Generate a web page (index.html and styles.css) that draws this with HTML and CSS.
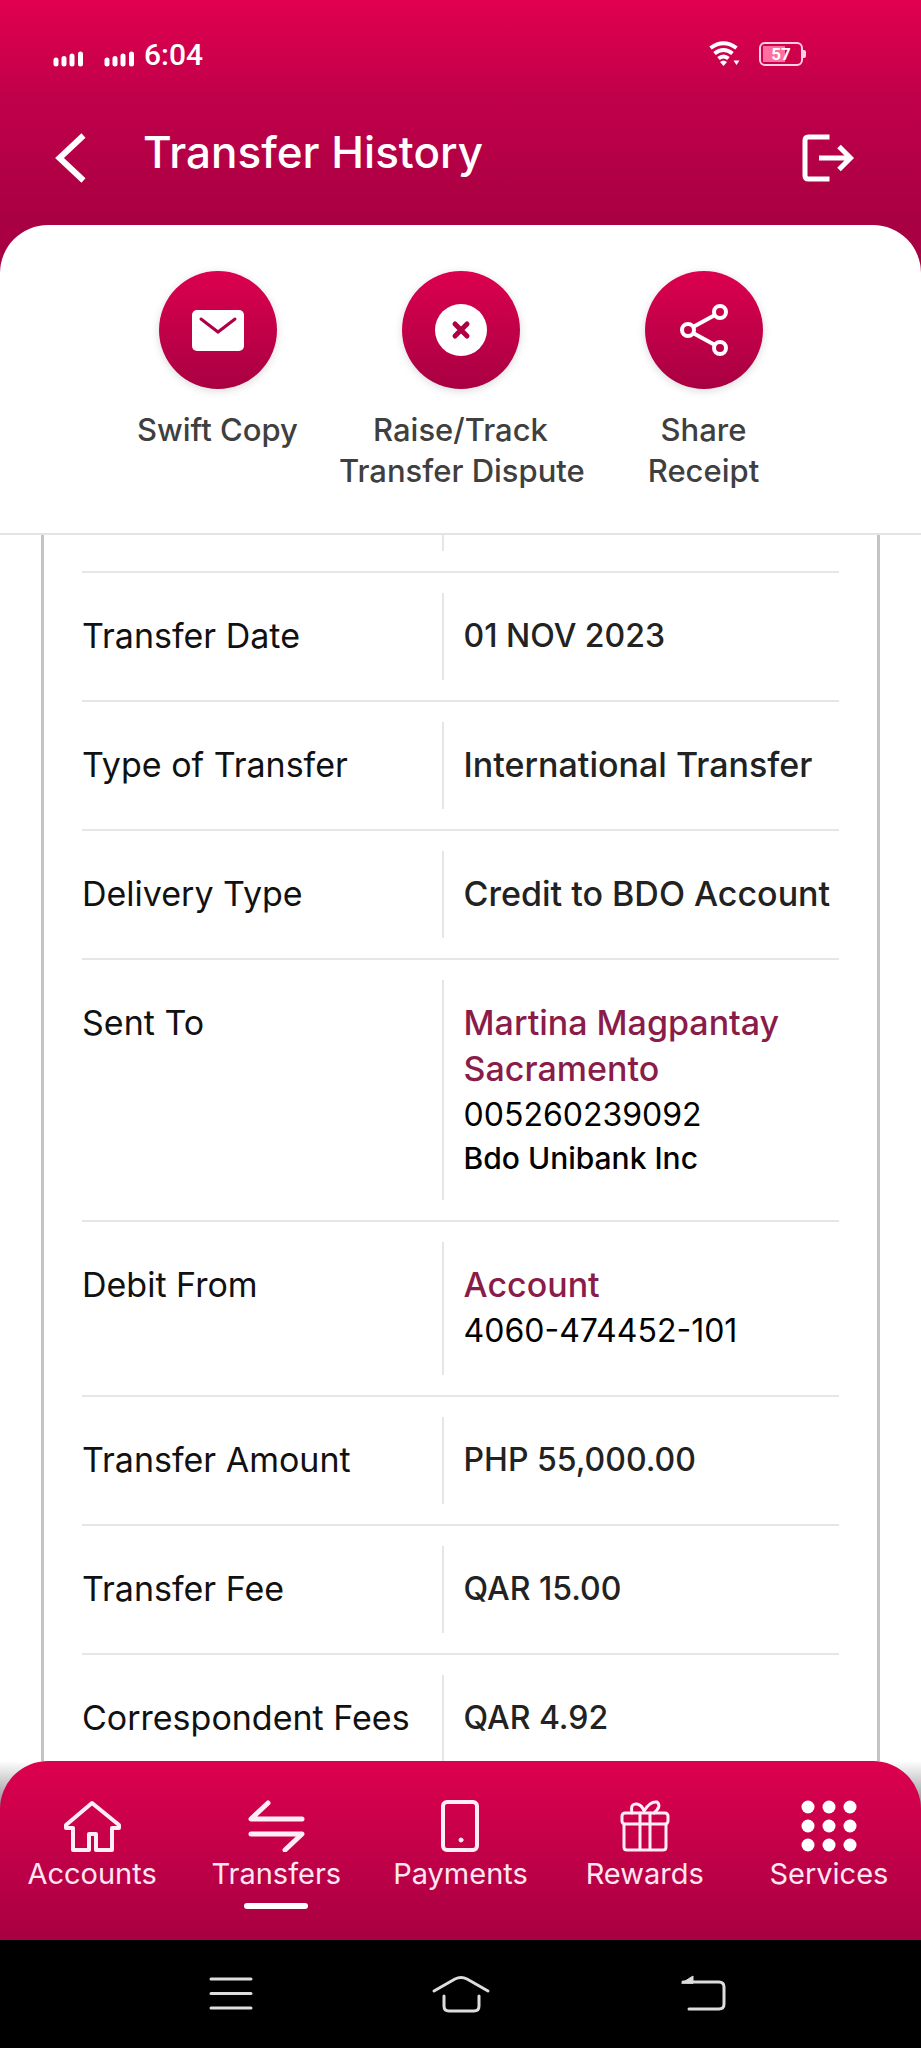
FILE: index.html
```html
<!DOCTYPE html>
<html lang="en">
<head>
    <meta charset="UTF-8">
    <meta name="viewport" content="width=device-width, initial-scale=1.0">
    <title>Transfer History</title>
    <link rel="stylesheet" href="styles.css">
</head>
<body>
    <div class="top">
        <div class="status-bar">
            <svg class="signal" width="31" height="16" viewBox="0 0 31 16">
                <path d="M3 9v4M11 7.500v5.500M19 5v8M27.500 3v10"/>
            </svg>
            <svg class="signal" width="31" height="16" viewBox="0 0 31 16">
                <path d="M3 9v4M11 7.500v5.500M19 5v8M27.500 3v10"/>
            </svg>
            <span class="clock">6:04</span>
            <svg class="wifi" width="32" height="26" viewBox="0 0 32 26">
                <path class="arc" d="M2.500 7Q15.500-2.500 28.500 7M6.500 12.500Q15.500 5.500 24.500 12.500M10.500 17.500Q15.500 13.500 20.500 17.500"/>
                <path class="dot" d="M12 21q3.500-3 7 0l-3.500 4zM25.500 19.500h6l-3 4.500z"/>
            </svg>
            <span class="battery">57</span>
        </div>
        <header>
            <button class="icon-button" aria-label="Back">
                <svg width="32" height="52" viewBox="0 0 32 52">
                    <path d="M28.500 3.500 4.500 26l24 22.500" stroke-width="6"/>
                </svg>
            </button>
            <h1>Transfer History</h1>
            <button class="icon-button" aria-label="Log out">
                <svg width="54" height="50" viewBox="0 0 54 50">
                    <path d="M28.500 4H7.500Q4 4 4 7.500v35Q4 46 7.500 46h21" stroke-width="5"/>
                    <path d="M18 25h31M38 13.500 49.500 25 38 36.500" stroke-width="5"/>
                </svg>
            </button>
        </header>
        <div class="actions">
            <button class="action">
                <span class="circle">
                    <svg width="52" height="52" viewBox="0 0 52 52">
                        <rect x="0" y="6" width="52" height="41" rx="5" fill="#fff"/>
                        <path d="m9 15 17 13 17-13" fill="none" stroke="#b00045" stroke-width="3" stroke-linecap="round"/>
                    </svg>
                </span>
                Swift Copy
            </button>
            <button class="action">
                <span class="circle">
                    <svg width="52" height="52" viewBox="0 0 52 52">
                        <circle cx="26" cy="26" r="26" fill="#fff"/>
                        <path d="m20 20 12 12m0-12L20 32" fill="none" stroke="#b00045" stroke-width="5" stroke-linecap="round"/>
                    </svg>
                </span>
                Raise/Track<br>Transfer Dispute
            </button>
            <button class="action">
                <span class="circle">
                    <svg width="52" height="52" viewBox="0 0 52 52">
                        <g fill="none" stroke="#fff" stroke-width="4">
                            <circle cx="10" cy="26" r="6"/>
                            <circle cx="42" cy="8" r="6"/>
                            <circle cx="42" cy="44" r="6"/>
                            <path d="m15 23 22-12M15 29l22 12"/>
                        </g>
                    </svg>
                </span>
                Share<br>Receipt
            </button>
        </div>
    </div>

    <main>
        <table class="details">
            <tr class="scrolled">
                <th></th>
                <td><div class="value"></div></td>
            </tr>
            <tr>
                <th scope="row">Transfer Date</th>
                <td><div class="value figure">01 NOV 2023</div></td>
            </tr>
            <tr>
                <th scope="row">Type of Transfer</th>
                <td><div class="value">International Transfer</div></td>
            </tr>
            <tr>
                <th scope="row">Delivery Type</th>
                <td><div class="value">Credit to BDO Account</div></td>
            </tr>
            <tr>
                <th scope="row">Sent To</th>
                <td>
                    <div class="value">
                        <div class="name">Martina Magpantay Sacramento</div>
                        <div class="number">005260239092</div>
                        <div class="bank">Bdo Unibank Inc</div>
                    </div>
                </td>
            </tr>
            <tr>
                <th scope="row">Debit From</th>
                <td>
                    <div class="value">
                        <div class="name">Account</div>
                        <div class="number">4060-474452-101</div>
                    </div>
                </td>
            </tr>
            <tr>
                <th scope="row">Transfer Amount</th>
                <td><div class="value figure">PHP 55,000.00</div></td>
            </tr>
            <tr>
                <th scope="row">Transfer Fee</th>
                <td><div class="value figure">QAR 15.00</div></td>
            </tr>
            <tr>
                <th scope="row">Correspondent Fees</th>
                <td><div class="value figure">QAR 4.92</div></td>
            </tr>
        </table>
    </main>

    <div class="tabs-wrapper">
        <nav class="tabs">
            <a href="#accounts">
                <svg width="58" height="52" viewBox="0 0 58 52">
                    <path d="M29 3 3 25v3h7v22h16V34h7v16h16V28h7v-3z" stroke-width="4"/>
                </svg>
                Accounts
            </a>
            <a href="#transfers" class="active">
                <svg width="58" height="52" viewBox="0 0 58 52">
                    <path d="M21 3 4 19h51M4 34h51L38 50" stroke-width="5"/>
                </svg>
                Transfers
            </a>
            <a href="#payments">
                <svg width="58" height="52" viewBox="0 0 58 52">
                    <rect x="12" y="2" width="34" height="48" rx="4" stroke-width="4"/>
                    <circle cx="30" cy="40" r="2" fill="#fff" stroke-width="1"/>
                </svg>
                Payments
            </a>
            <a href="#rewards">
                <svg width="58" height="52" viewBox="0 0 58 52">
                    <rect x="6" y="13" width="46" height="11" rx="3" stroke-width="3"/>
                    <path d="M8 24v23q0 3 3 3h36q3 0 3-3V24M24 13v37M34 13v37M16 13q-2-10 5-9 5 1 7 7 6-10 13-9 5 4-3 11" stroke-width="3"/>
                </svg>
                Rewards
            </a>
            <a href="#services">
                <svg width="58" height="52" viewBox="0 0 58 52">
                    <g fill="#fff" stroke="none">
                        <circle cx="8" cy="7" r="6.500"/>
                        <circle cx="29" cy="7" r="6.500"/>
                        <circle cx="50" cy="7" r="6.500"/>
                        <circle cx="8" cy="26" r="6.500"/>
                        <circle cx="29" cy="26" r="6.500"/>
                        <circle cx="50" cy="26" r="6.500"/>
                        <circle cx="8" cy="45" r="6.500"/>
                        <circle cx="29" cy="45" r="6.500"/>
                        <circle cx="50" cy="45" r="6.500"/>
                    </g>
                </svg>
                Services
            </a>
        </nav>
    </div>

    <div class="system-bar">
        <button aria-label="Recent apps">
            <svg width="80" height="40" viewBox="0 0 80 40">
                <path d="M26 5h40M26 19.500h40M26 34h40"/>
            </svg>
        </button>
        <button aria-label="Home">
            <svg width="80" height="40" viewBox="0 0 80 40">
                <path d="M13 17 34 5q6-3 12 0l21 12M23 22v10q0 5 5 5h25q5 0 5-5V22"/>
            </svg>
        </button>
        <button aria-label="Back">
            <svg width="80" height="40" viewBox="0 0 80 40">
                <path d="M26 8h36q5 0 5 5v17q0 5-5 5H32"/>
                <path d="M25 9 36 2v7z" fill="#ddd" stroke-width="1"/>
            </svg>
        </button>
    </div>
</body>
</html>
```

FILE: styles.css
```css
* {
    box-sizing: border-box;
}
body {
    margin: 0;
    height: 100vh;
    display: flex;
    flex-direction: column;
    font-family: Inter, "Liberation Sans", sans-serif;
    font-size: 32px;
    color: #111;
    background: #fff;
}
button {
    margin: 0;
    padding: 0;
    border: none;
    background: none;
    font-family: inherit;
    cursor: pointer;
}
svg {
    display: block;
    flex: none;
}

/* header */
.top {
    flex: none;
    background: linear-gradient(#e1004f, #c0004a 100px, #a80042 225px, #a80042);
}
.status-bar {
    display: flex;
    align-items: center;
    height: 108px;
    padding: 0 118px 0 53px;
    color: #fff;
}
.signal {
    margin: 10px 20px 0 0;
    fill: none;
    stroke: #fff;
    stroke-width: 5;
    stroke-linecap: round;
}
.signal + .clock {
    margin-left: -11px;
}
.clock {
    font-family: Roboto, sans-serif;
    font-size: 30px;
    font-weight: 500;
}
.wifi {
    margin-left: auto;
}
.wifi .arc {
    fill: none;
    stroke: #fff;
    stroke-width: 4;
}
.wifi .dot {
    fill: #fff;
}
.battery {
    position: relative;
    width: 44px;
    height: 24px;
    margin-left: 19px;
    border: 2px solid #ffd0e2;
    border-radius: 6px;
    background: linear-gradient(#ff6f9f, #ff6f9f) 2px 2px / 22px 16px no-repeat;
    font-family: Roboto, sans-serif;
    font-size: 17px;
    font-weight: 700;
    line-height: 20px;
    text-align: center;
}
.battery::after {
    content: '';
    position: absolute;
    right: -5px;
    top: 6px;
    width: 3px;
    height: 8px;
    border-radius: 0 2px 2px 0;
    background: #ffd0e2;
}
header {
    display: flex;
    align-items: center;
    height: 117px;
    padding: 0 66px 17px 55px;
    color: #fff;
}
h1 {
    flex: 1;
    margin: 0 0 12px 56px;
    font-size: 44px;
    font-weight: 500;
}
.icon-button svg {
    fill: none;
    stroke: #fff;
}

/* round buttons */
.actions {
    display: grid;
    grid-template-columns: repeat(3, 243px);
    justify-content: center;
    padding: 46px 0 42px;
    border-bottom: 2px solid #e4e4e4;
    border-radius: 48px 48px 0 0;
    background: #fff;
}
.action {
    display: block;
    align-self: start;
    font-size: 31px;
    font-weight: 500;
    line-height: 41px;
    color: #3f3f3f;
    white-space: nowrap;
}
.circle {
    display: flex;
    align-items: center;
    justify-content: center;
    width: 118px;
    height: 118px;
    margin: 0 auto 20px;
    border-radius: 50%;
    background: linear-gradient(#dc004f, #a80042);
    box-shadow: 0 2px 8px rgba(0, 0, 0, 0.15);
}

/* transfer details */
main {
    flex: 1;
    min-height: 0;
    margin: 0 41px;
    padding: 0 38px;
    border: solid #c4c4c4;
    border-width: 0 3px;
    overflow: hidden;
}
.details {
    width: 100%;
    table-layout: fixed;
    border-collapse: collapse;
}
.details tr {
    border-bottom: 2px solid #e6e6e6;
}
.details th {
    width: 47.5%;
    padding: 40px 0 0;
    font-size: 34px;
    font-weight: 400;
    line-height: 46px;
    text-align: left;
    vertical-align: top;
    white-space: nowrap;
}
.details td {
    padding: 20px 0;
}
.details .scrolled th,
.details .scrolled td {
    padding-top: 0;
}
.value {
    padding: 20px 0 21px 20px;
    border-left: 2px solid #e6e6e6;
    font-size: 34px;
    font-weight: 500;
    line-height: 46px;
    color: #222;
}
.figure {
    font-size: 32px;
}
.scrolled .value {
    padding: 0;
    height: 16px;
}
.name {
    color: #8a1c4a;
}
.number {
    font-size: 32px;
    font-weight: 400;
    color: #000;
}
.bank {
    font-size: 30px;
    line-height: 41px;
    color: #000;
}

/* bottom tabs */
.tabs-wrapper {
    flex: none;
    background: linear-gradient(#fff, #888 48px);
}
.tabs {
    display: grid;
    grid-template-columns: repeat(5, 1fr);
    padding: 39px 0 31px;
    border-radius: 48px 48px 0 0;
    background: linear-gradient(#dd004f, #a80042);
}
.tabs a {
    display: flex;
    flex-direction: column;
    align-items: center;
    font-size: 29px;
    line-height: 36px;
    color: #ffe6f0;
    text-decoration: none;
}
.tabs a::after {
    content: '';
    width: 64px;
    height: 6px;
    margin-top: 11px;
    border-radius: 3px;
}
.tabs .active::after {
    background: #fff;
}
.tabs svg {
    margin-bottom: 4px;
    fill: none;
    stroke: #ffeef5;
    stroke-linecap: round;
    stroke-linejoin: round;
}

.system-bar {
    flex: none;
    display: grid;
    grid-template-columns: repeat(3, 236px);
    justify-content: center;
    align-items: center;
    justify-items: center;
    height: 108px;
    background: #000;
}
.system-bar svg {
    fill: none;
    stroke: #ddd;
    stroke-width: 3;
    stroke-linecap: round;
}
```
